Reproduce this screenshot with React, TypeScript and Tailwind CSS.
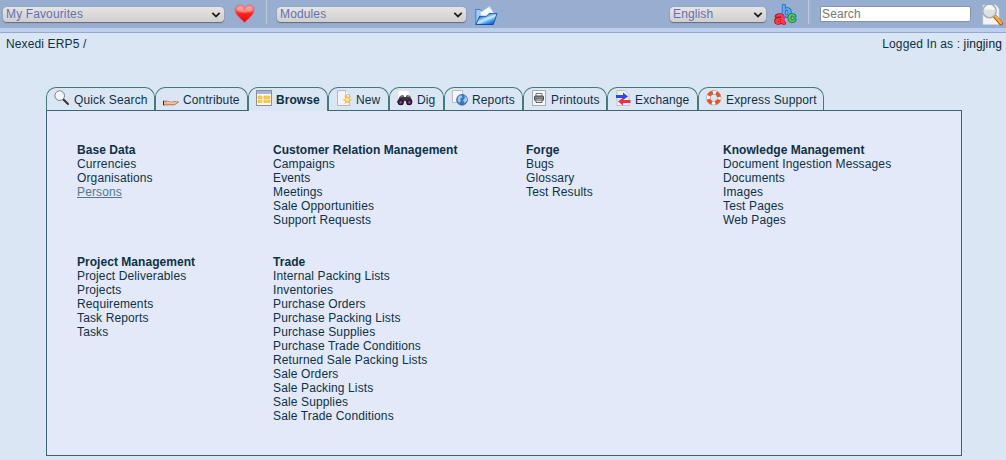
import React from "react";

type IconProps = { className?: string };

const Heart = () => (
  <svg width="22" height="20" viewBox="0 0 22 20" className="shrink-0">
    <defs>
      <linearGradient id="heart" x1="0" y1="0" x2="0" y2="1">
        <stop offset="0" stopColor="#ff9a92" />
        <stop offset=".35" stopColor="#ff5a52" />
        <stop offset=".5" stopColor="#ff2020" />
        <stop offset="1" stopColor="#e80808" />
      </linearGradient>
    </defs>
    <path d="M10.500 18.500 C8 15.500 1 11 1 6 C1 2.500 3.400 1 5.800 1 C8.400 1 10 2.600 10.500 3.500 C11.300 2.600 13 1 15.500 1 C18 1 20 2.500 20 6 C20 11 13.500 15.500 10.500 18.500Z" fill="url(#heart)" stroke="#c86878" strokeWidth=".8" />
    <path d="M2.500 6 C3 2 8 1.500 9.800 5 L10.500 7 L11.500 5 C13.500 1.500 18 2 18.500 6 C14 9.500 8 9.500 2.500 6Z" fill="#fff" opacity=".28" />
  </svg>
);

const Folder = () => (
  <svg width="24" height="20" viewBox="0 0 24 20" className="shrink-0">
    <defs>
      <linearGradient id="folder" x1="0" y1="0" x2=".8" y2="1">
        <stop offset="0" stopColor="#0d4cc9" />
        <stop offset=".3" stopColor="#2f86ec" />
        <stop offset=".55" stopColor="#c9efff" />
        <stop offset=".75" stopColor="#4b9cf2" />
        <stop offset="1" stopColor="#0848c8" />
      </linearGradient>
    </defs>
    <path d="M.8 18.500V3.500H5.500L7 5.500H17V18.500Z" fill="#9ccff8" stroke="#2a6bc8" strokeWidth=".8" />
    <path d="M5.500 6.500L14.500.6L19 7.500L15 12H6Z" fill="#f8faff" stroke="#c5d0ea" strokeWidth=".7" />
    <path d="M1 18.500L4.500 10.300H11.500L14 7.600H22L18.300 18.500Z" fill="url(#folder)" stroke="#0a3cab" strokeWidth=".8" />
  </svg>
);

const Letters = () => (
  <svg width="24" height="24" viewBox="0 0 24 24" className="shrink-0 overflow-visible" fontFamily='"Liberation Sans", sans-serif' fontWeight="bold" strokeLinejoin="round">
    <text x="7.500" y="14.500" fontSize="16" fill="#62aef5" stroke="#1763b8" strokeWidth="1.600" paintOrder="stroke">b</text>
    <text x="13.800" y="19.500" fontSize="15" fill="#4bd05e" stroke="#15712f" strokeWidth="1.600" paintOrder="stroke">c</text>
    <text x=".6" y="21.500" fontSize="19" fill="#ff3e48" stroke="#b90b1b" strokeWidth="1.600" paintOrder="stroke">a</text>
  </svg>
);

const SearchDoc = () => (
  <svg width="23" height="23" viewBox="0 0 23 23" className="shrink-0">
    <path d="M2 2H15L18 6V21.500H2Z" fill="#f4f4f7" stroke="#d2d7df" strokeWidth=".6" />
    <path d="M14 13.500L20 20.500" stroke="#a85b12" strokeWidth="4" strokeLinecap="round" />
    <path d="M14.500 13.500L20 20" stroke="#ffb52c" strokeWidth="2.400" strokeLinecap="round" />
    <circle cx="8.500" cy="8" r="6.800" fill="#dce2e4" stroke="#a5aaad" strokeWidth="1.300" />
    <path d="M3.500 7A5 5 0 0 1 13.500 7Q8 6 3.500 7Z" fill="#fff" opacity=".7" />
  </svg>
);

const Quick = ({ className }: IconProps) => (
  <svg width="16" height="16" viewBox="0 0 16 16" className={className}>
    <path d="M9.500 9.500L14 14" stroke="#333" strokeWidth="1.900" strokeLinecap="round" />
    <circle cx="5.700" cy="5.700" r="4.800" fill="#f1f8fb" stroke="#777d80" />
    <path d="M2.500 5Q3.500 2.300 6.500 2.300" stroke="#fff" fill="none" strokeWidth="1.500" />
  </svg>
);

const Hand = ({ className }: IconProps) => (
  <svg width="16" height="16" viewBox="0 0 16 16" className={className}>
    <path d="M0 11L4 11.200L8 12.300L12 11.600L15.500 12L11.500 14.800H4L0 15.200Z" fill="#f3b48c" stroke="#a65b37" strokeWidth=".8" />
    <path d="M.5 11V15" stroke="#412420" />
    <path d="M4 12L9 13.200L14 12.300" stroke="#ffe0bd" strokeWidth=".8" fill="none" />
  </svg>
);

const Browse = ({ className }: IconProps) => (
  <svg width="16" height="16" viewBox="0 0 16 16" className={className}>
    <rect x=".5" y=".5" width="15" height="15" fill="#fafafa" stroke="#8c9097" />
    <path d="M1 1H15V4H1Z" fill="#a9b7ce" />
    <path d="M2 6H6V8.500H2ZM2 10H6V12.500H2ZM8 6H14V8.500H8ZM8 10H14V12.500H8Z" fill="#ffd43a" stroke="#f9ac2a" strokeWidth=".6" />
  </svg>
);

const NewDoc = ({ className }: IconProps) => (
  <svg width="16" height="16" viewBox="0 0 16 16" className={className}>
    <path d="M1.500.5H9.500L13.500 4.500V15.500H1.500Z" fill="#f3f4fb" stroke="#b5b7bf" />
    <path d="M9.500.5V4.500H13.500" fill="#fff" stroke="#c2c4ca" />
    <path d="M10.800 4.500L12 7.200L15 6L13.800 8.800L16 10L13.300 11L14 14L11 12.300L8.500 14L9 11L6.500 9.500L9.300 8.500L8.500 5.800Z" fill="#ffbd55" />
    <circle cx="11.200" cy="9.500" r="1.800" fill="#fff27a" />
  </svg>
);

const Dig = ({ className }: IconProps) => (
  <svg width="16" height="16" viewBox="0 0 16 16" className={className}>
    <path d="M1 .5H12V13H1Z" fill="#fff" stroke="#ddd" strokeWidth=".5" />
    <path d="M1 10L3 6L6 5L7 7H9L10 5L13 6L15.500 11L14 15H10L8.500 11H7.500L6 15H2L0 12Z" fill="#39383d" />
    <circle cx="3.600" cy="12.300" r="2.500" fill="#602375" stroke="#18151b" />
    <circle cx="12.300" cy="12.300" r="2.500" fill="#602375" stroke="#18151b" />
    <path d="M3 7L6 6M10 6L13 7" stroke="#888" />
    <circle cx="3.700" cy="12.300" r=".8" fill="#b653c5" />
    <circle cx="12.300" cy="12.300" r=".8" fill="#b653c5" />
  </svg>
);

const Reports = ({ className }: IconProps) => (
  <svg width="16" height="16" viewBox="0 0 16 16" className={className}>
    <path d="M.5.5H10.500V12.500H.5Z" fill="#f8f8f8" stroke="#b9bcc2" />
    <circle cx="10" cy="9.800" r="5.400" fill="#3977bd" stroke="#3b649c" strokeWidth=".8" />
    <path d="M6 7L9 5L10.500 7L8 9L9 11L7 13L5.500 10ZM12 5L15 8V11L12.500 13L11 10L13 8Z" fill="#9ccaf2" />
  </svg>
);

const Printer = ({ className }: IconProps) => (
  <svg width="16" height="16" viewBox="0 0 16 16" className={className}>
    <path d="M1.500.5H14.500V15.500H1.500Z" fill="#f7f7f7" stroke="#aaa" />
    <path d="M5 6V3.500H11V6" fill="#fff" stroke="#777" />
    <rect x="3.500" y="6" width="9" height="4.500" rx="1" fill="#888" stroke="#444" />
    <path d="M5 9H11V12.500H5Z" fill="#e5e5e5" stroke="#666" />
    <path d="M5 10.500H11" stroke="#999" />
  </svg>
);

const Exchange = ({ className }: IconProps) => (
  <svg width="16" height="16" viewBox="0 0 16 16" className={className}>
    <path d="M2 .5H10L14 4.500V15.500H2Z" fill="#f1f2f7" stroke="#b5b9c1" strokeWidth=".8" />
    <path d="M1 5H8V2.500L13 6.500L8 10V8H1Z" fill="#284bf4" />
    <path d="M15.500 10H8V7.500L3 11.500L8 15.500V13H15.500Z" fill="#ed3144" />
  </svg>
);

const Support = ({ className }: IconProps) => (
  <svg width="16" height="16" viewBox="0 0 16 16" className={className}>
    <circle cx="7.800" cy="7.800" r="5.400" fill="none" stroke="#8e969b" strokeWidth="4.300" />
    <circle cx="7.800" cy="7.800" r="5.400" fill="none" stroke="#f9f9fa" strokeWidth="3.300" />
    <circle cx="7.800" cy="7.800" r="5.400" fill="none" stroke="#eb5324" strokeWidth="3.600" strokeDasharray="5 3.482" strokeDashoffset="-1.740" />
  </svg>
);

const tabs = [
  { name: "Quick Search", Icon: Quick, width: "w-[109px]" },
  { name: "Contribute", Icon: Hand, width: "w-[93px]" },
  { name: "Browse", Icon: Browse, width: "w-[80px]" },
  { name: "New", Icon: NewDoc, width: "w-[61px]" },
  { name: "Dig", Icon: Dig, width: "w-[55px]" },
  { name: "Reports", Icon: Reports, width: "w-[79px]" },
  { name: "Printouts", Icon: Printer, width: "w-[84px]" },
  { name: "Exchange", Icon: Exchange, width: "w-[91px]" },
  { name: "Express Support", Icon: Support, width: "w-[126px]" },
];

const groups = [
  { title: "Base Data", links: ["Currencies", "Organisations", "Persons"] },
  { title: "Customer Relation Management", links: ["Campaigns", "Events", "Meetings", "Sale Opportunities", "Support Requests"] },
  { title: "Forge", links: ["Bugs", "Glossary", "Test Results"] },
  { title: "Knowledge Management", links: ["Document Ingestion Messages", "Documents", "Images", "Test Pages", "Web Pages"] },
  { title: "Project Management", links: ["Project Deliverables", "Projects", "Requirements", "Task Reports", "Tasks"] },
  { title: "Trade", links: ["Internal Packing Lists", "Inventories", "Purchase Orders", "Purchase Packing Lists", "Purchase Supplies", "Purchase Trade Conditions", "Returned Sale Packing Lists", "Sale Orders", "Sale Packing Lists", "Sale Supplies", "Sale Trade Conditions"] },
];

function Picker({ label, className }: { label: string; className: string }) {
  return (
    <button className={`flex h-[15px] shrink-0 items-center justify-between rounded-[4px] bg-linear-to-b from-[#e6e5e4] to-[#d0cfce] pr-[3px] pl-[3px] text-[12px] leading-[15px] text-[#6470b4] shadow-[0_1px_1px_#626b79,0_0_1px_#7c8796] ${className}`}>
      <span>{label}</span>
      <svg width="10" height="8" viewBox="0 0 10 8" className="mt-px">
        <path d="M1.300 1.800L5 5.500L8.700 1.800" fill="none" stroke="#202020" strokeWidth="1.800" />
      </svg>
    </button>
  );
}

const Divider = ({ className }: IconProps) => <div className={`h-6 w-px shrink-0 bg-[#bdcbd9] ${className}`} />;

export default function App() {
  return (
    <div className="h-[460px] w-[1006px] overflow-hidden bg-[#dbe6f5] font-['Liberation_Sans',Arial,sans-serif] text-[12px] leading-[14px] tracking-[0.13px] text-[#0d3147]">
      <header className="flex h-7 items-center bg-[#97aed0]">
        <Picker label="My Favourites" className="ml-[3px] w-[221px]" />
        <div className="ml-[10px]"><Heart /></div>
        <Divider className="ml-[10px] -mt-1" />
        <Picker label="Modules" className="ml-[10px] w-[189px]" />
        <div className="ml-[9px] mt-[3px]"><Folder /></div>
        <Picker label="English" className="ml-[171px] w-[96px]" />
        <div className="ml-2"><Letters /></div>
        <Divider className="ml-[10px] -mt-1" />
        <input placeholder="Search" className="ml-[11px] h-[16px] w-[151px] rounded-[2px] border border-[#8494aa] bg-white px-px text-[12px] leading-[14px] outline-none placeholder:text-[#777]" />
        <div className="ml-[10px]"><SearchDoc /></div>
      </header>
      <div className="h-[5px] border-b border-[#91aad2] bg-[#bdcfed]" />
      <div className="flex h-[54px] items-start justify-between pt-1 pr-[4px] pl-[6px]">
        <span>Nexedi ERP5 /</span>
        <span>Logged In as : <span className="text-[#071b2c]">jingjing</span></span>
      </div>
      <main className="ml-[46px] w-[916px]">
        <nav className="flex h-[23px]">
          {tabs.map(({ name, Icon, width }) => (
            <a key={name} className={`flex shrink-0 rounded-t-[10px] border border-b-0 border-[#427b78] bg-[#dbe6f5] pt-[2px] pl-[7px] whitespace-nowrap ${width} ${name === "Browse" ? "relative z-10 h-6 font-bold tracking-[0.05px]" : "h-[23px]"}`}>
              <Icon className="mr-1 shrink-0" />
              <span className="pt-[3px]">{name}</span>
            </a>
          ))}
        </nav>
        <section className="grid h-[346px] grid-cols-[196px_253px_197px_1fr] grid-rows-[112px_1fr] border border-[#3c6577] bg-[#e3e9f9] pt-8 pl-[30px]">
          {groups.map(({ title, links }) => (
            <div key={title}>
              <h2 className="font-bold tracking-[0.04px]">{title}</h2>
              <ul>
                {links.map((link) => (
                  <li key={link}><a className={link === "Persons" ? "text-[#54788b] underline" : ""}>{link}</a></li>
                ))}
              </ul>
            </div>
          ))}
        </section>
      </main>
    </div>
  );
}
